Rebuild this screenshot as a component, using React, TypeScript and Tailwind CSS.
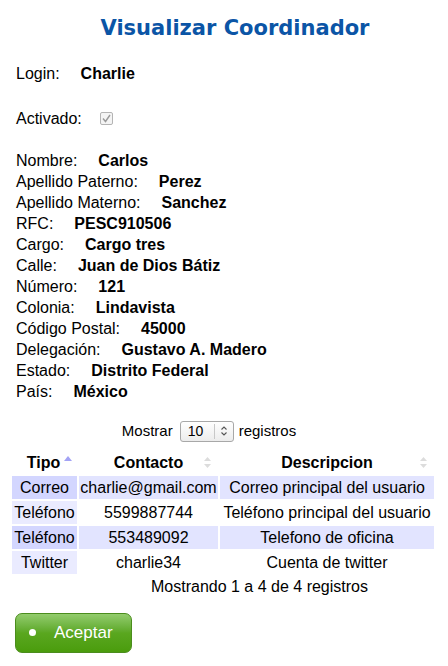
const datos = [
  { label: 'Nombre:', valor: 'Carlos' },
  { label: 'Apellido Paterno:', valor: 'Perez' },
  { label: 'Apellido Materno:', valor: 'Sanchez' },
  { label: 'RFC:', valor: 'PESC910506' },
  { label: 'Cargo:', valor: 'Cargo tres' },
  { label: 'Calle:', valor: 'Juan de Dios Bátiz' },
  { label: 'Número:', valor: '121' },
  { label: 'Colonia:', valor: 'Lindavista' },
  { label: 'Código Postal:', valor: '45000' },
  { label: 'Delegación:', valor: 'Gustavo A. Madero' },
  { label: 'Estado:', valor: 'Distrito Federal' },
  { label: 'País:', valor: 'México' },
];

const contactos = [
  { tipo: 'Correo', contacto: 'charlie@gmail.com', desc: 'Correo principal del usuario' },
  { tipo: 'Teléfono', contacto: '5599887744', desc: 'Teléfono principal del usuario' },
  { tipo: 'Teléfono', contacto: '553489092', desc: 'Telefono de oficina' },
  { tipo: 'Twitter', contacto: 'charlie34', desc: 'Cuenta de twitter' },
];

const SortBoth = () => (
  <svg width="7" height="11" viewBox="0 0 7 11" className="absolute right-[7px] top-[6px]">
    <path d="M3.5 0 L7 4 L0 4 Z" fill="#dcdcdc" />
    <path d="M0 7 L7 7 L3.5 11 Z" fill="#dcdcdc" />
  </svg>
);

const SortAsc = () => (
  <svg width="8" height="5" viewBox="0 0 8 5" className="absolute right-[5px] top-[5px]">
    <path d="M4 0 L8 5 L0 5 Z" fill="#a3a3f5" />
  </svg>
);

const App = () => {
  return (
    <div className="min-h-screen w-[448px] bg-white font-['Liberation_Sans',Arial,sans-serif] text-[16px] text-black">
      <h1 className="pt-4 pl-[22px] text-center font-['DejaVu_Sans',sans-serif] text-[21px] font-bold leading-[25px] text-[#0b55a6]">
        Visualizar Coordinador
      </h1>

      <div className="mt-[22px] flex pl-4 leading-[21px]">
        <span>Login:</span>
        <span className="ml-[21px] font-bold">Charlie</span>
      </div>

      <div className="mt-6 flex items-center pl-4 leading-[21px]">
        <span>Activado:</span>
        <span className="ml-[18px] flex h-[13px] w-[13px] items-center justify-center rounded-[2px] border border-[#b4b4b4] bg-[#f4f4f4]">
          <svg width="9" height="9" viewBox="0 0 9 9">
            <path d="M1 4.5 L3.5 7.5 L8 1" fill="none" stroke="#9a9a9a" strokeWidth="1.4" />
          </svg>
        </span>
      </div>

      <div className="mt-[21px] pl-4 leading-[21px]">
        {datos.map(d => (
          <div key={d.label} className="flex">
            <span>{d.label}</span>
            <span className="ml-[21px] font-bold">{d.valor}</span>
          </div>
        ))}
      </div>

      <div className="mt-[18px] flex items-center justify-center pr-[30px] text-[15px]">
        <span>Mostrar</span>
        <div className="ml-[7px] mr-[5px] flex h-[21px] w-[54px] items-center rounded-[3px] border border-[#a8a8a8] bg-linear-to-b from-white to-[#ececec]">
          <span className="pl-[7px] text-[14px]">10</span>
          <span className="ml-auto h-[15px] border-l border-[#c8c8c8]" />
          <svg width="14" height="12" viewBox="0 0 14 12" className="mx-[2px]">
            <path d="M4.5 4.5 L7 2 L9.5 4.5" fill="none" stroke="#555" strokeWidth="1.1" />
            <path d="M4.5 7.5 L7 10 L9.5 7.5" fill="none" stroke="#555" strokeWidth="1.1" />
          </svg>
        </div>
        <span>registros</span>
      </div>

      <table className="ml-[10px] mt-[6px] border-separate border-spacing-[2px] text-center leading-[19px]">
        <thead>
          <tr className="h-[23px]">
            <th className="relative w-[65px] p-0 pr-[2px] font-bold">
              Tipo
              <SortAsc />
            </th>
            <th className="relative w-[139px] p-0 font-bold">
              Contacto
              <SortBoth />
            </th>
            <th className="relative w-[214px] p-0 font-bold">
              Descripcion
              <SortBoth />
            </th>
          </tr>
        </thead>
        <tbody>
          {contactos.map((c, i) => {
            const odd = i % 2 === 0;
            return (
              <tr key={i} className="h-[23px]">
                <td className={odd ? 'bg-[#d3d6ff] p-0' : 'bg-[#eaebff] p-0'}>{c.tipo}</td>
                <td className={odd ? 'bg-[#e2e4ff] p-0' : 'bg-white p-0'}>{c.contacto}</td>
                <td className={odd ? 'bg-[#e2e4ff] p-0' : 'bg-white p-0'}>{c.desc}</td>
              </tr>
            );
          })}
        </tbody>
      </table>

      <div className="pl-[71px] text-center leading-[21px]">Mostrando 1 a 4 de 4 registros</div>

      <div className="mt-[16px] pl-[15px]">
        <button className="flex h-[40px] w-[117px] items-center rounded-[7px] border border-[#4b8d1d] bg-linear-to-b from-[#93cc6c] via-[#5aa71f] via-50% to-[#4a9c0c] pl-[13px] text-[17px] text-white">
          <span className="h-[7px] w-[7px] rounded-full bg-white" />
          <span className="ml-[18px]">Aceptar</span>
        </button>
      </div>
    </div>
  );
};

export default App;
